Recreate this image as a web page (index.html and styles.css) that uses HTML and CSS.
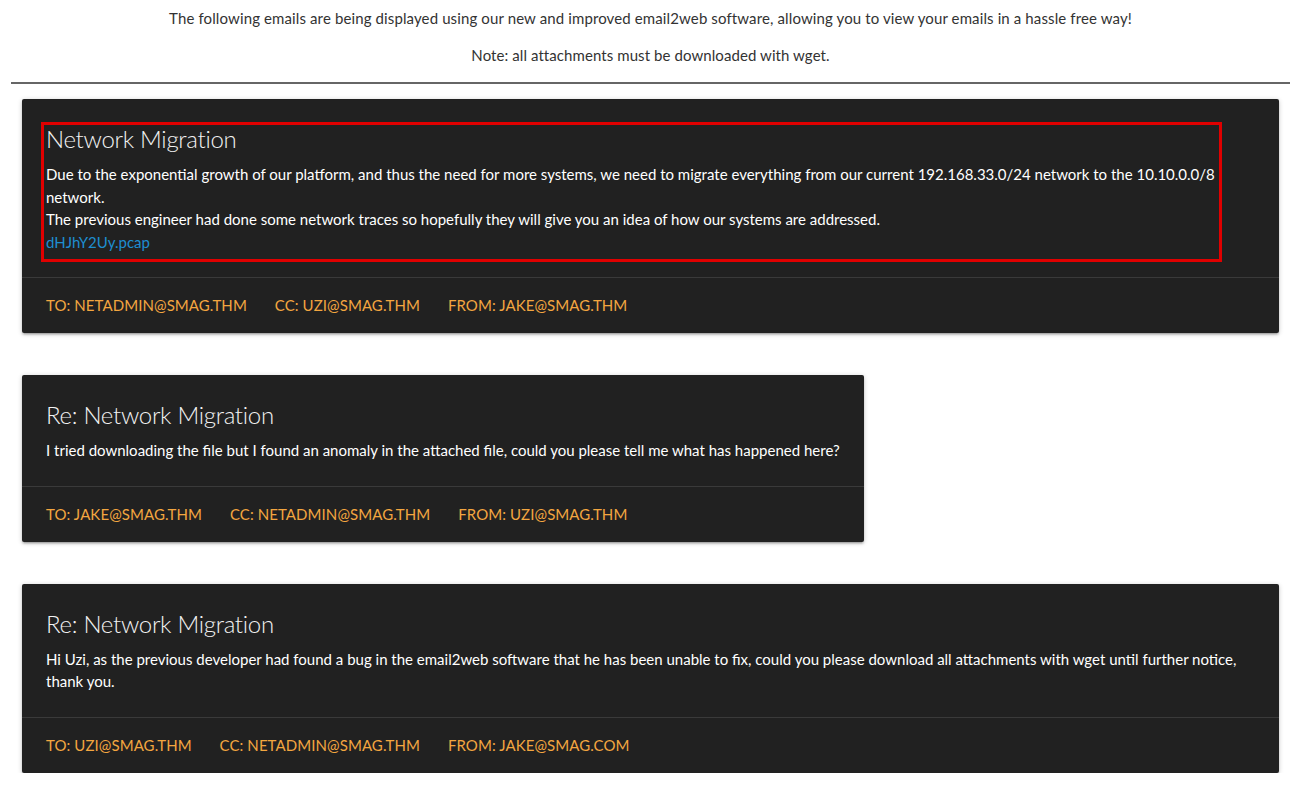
FILE: index.html
```html
<!DOCTYPE html>
<html lang="en">
<head>
<meta charset="utf-8">
<title>email2web</title>
<link rel="stylesheet" href="styles.css">
</head>
<body>
<div class="page">
  <div class="intro">
    <p>The following emails are being displayed using our new and improved email2web software, allowing you to view your emails in a hassle free way!</p>
    <p>Note: all attachments must be downloaded with wget.</p>
  </div>
  <hr class="rule">
  <div class="mails">
    <div class="card">
      <div class="card-content">
        <span class="card-title">Network Migration</span>
        <p>Due to the exponential growth of our platform, and thus the need for more systems, we need to migrate everything from our current 192.168.33.0/24 network to the 10.10.0.0/8 network.</p>
        <p>The previous engineer had done some network traces so hopefully they will give you an idea of how our systems are addressed.</p>
        <a class="attach" href="#">dHJhY2Uy.pcap</a>
      </div>
      <div class="card-action">
        <a href="#">To: netadmin@smag.thm</a>
        <a href="#">CC: uzi@smag.thm</a>
        <a href="#">From: jake@smag.thm</a>
      </div>
      <div class="highlight"></div>
    </div>

    <div class="card">
      <div class="card-content">
        <span class="card-title">Re: Network Migration</span>
        <p>I tried downloading the file but I found an anomaly in the attached file, could you please tell me what has happened here?</p>
      </div>
      <div class="card-action">
        <a href="#">To: jake@smag.thm</a>
        <a href="#">CC: netadmin@smag.thm</a>
        <a href="#">From: uzi@smag.thm</a>
      </div>
    </div>

    <div class="card">
      <div class="card-content">
        <span class="card-title">Re: Network Migration</span>
        <p>Hi Uzi, as the previous developer had found a bug in the email2web software that he has been unable to fix, could you please download all attachments with wget until further notice, thank you.</p>
      </div>
      <div class="card-action">
        <a href="#">To: uzi@smag.thm</a>
        <a href="#">CC: netadmin@smag.thm</a>
        <a href="#">From: jake@smag.com</a>
      </div>
    </div>
  </div>
</div>
</body>
</html>
```

FILE: styles.css
```css
html, body {
  margin: 0;
  padding: 0;
  background: #ffffff;
}

body {
  font-family: Lato, "Liberation Sans", sans-serif;
  font-size: 15px;
  line-height: 1.5;
  color: rgba(0, 0, 0, 0.87);
}

.page {
  width: 1301px;
}

.intro {
  padding-top: 7px;
  text-align: center;
  color: #333;
  letter-spacing: 0.08px;
}

.intro p {
  margin: 0 0 14px;
}

.intro p:first-child {
  letter-spacing: 0.12px;
}

.intro p:last-child {
  margin-bottom: 16px;
}

.rule {
  margin: 0 11px 15px;
  height: 0;
  border: 0;
  border-top: 2px solid #666;
}

.mails {
  display: flex;
  flex-direction: column;
  align-items: flex-start;
  gap: 42px;
  padding: 0 22px;
}

.card {
  position: relative;
  max-width: 100%;
  box-sizing: border-box;
  background: #212121;
  color: #fff;
  border-radius: 2px;
  box-shadow: 0 2px 2px 0 rgba(0, 0, 0, 0.14), 0 3px 1px -2px rgba(0, 0, 0, 0.12), 0 1px 5px 0 rgba(0, 0, 0, 0.2);
}

.card-content {
  padding: 24px;
}

.card-title {
  display: block;
  font-size: 24px;
  font-weight: 300;
  line-height: 32px;
  letter-spacing: -0.3px;
  margin-bottom: 8px;
  color: #f2f2f2;
}

.card-content p {
  margin: 0;
}

.attach {
  color: #1e8ed0;
  text-decoration: none;
}

.card-action {
  border-top: 1px solid rgba(160, 160, 160, 0.2);
  padding: 16px 24px;
  line-height: 23px;
  letter-spacing: 0.08px;
}

.card-action a {
  color: #f3a640;
  text-transform: uppercase;
  text-decoration: none;
  margin-right: 24px;
}

.highlight {
  position: absolute;
  left: 19px;
  top: 23px;
  width: 1181px;
  height: 140px;
  box-sizing: border-box;
  border: 3px solid #e00000;
  pointer-events: none;
}
```
